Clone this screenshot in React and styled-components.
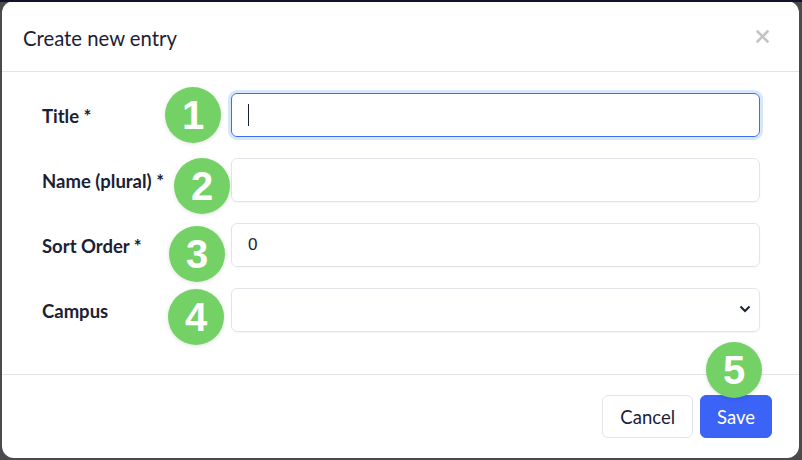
import React from 'react'
import styled, { createGlobalStyle } from 'styled-components'

const GlobalStyle = createGlobalStyle`
  html, body {
    margin: 0;
    padding: 0;
    background: #4b4b4d;
    font-family: Lato, "Noto Sans", sans-serif;
  }
  body {
    border-top: 2px solid #10132a;
  }
`

const Modal = styled.div`
  position: relative;
  box-sizing: border-box;
  margin: -1px 0 0 2px;
  width: 797px;
  height: 457px;
  background: #fff;
  border-radius: 12px;
  display: flex;
  flex-direction: column;
  overflow: hidden;
`

const Header = styled.div`
  height: 70px;
  flex: none;
  display: flex;
  align-items: center;
  justify-content: space-between;
  padding: 0 30px 0 21px;
  border-bottom: 1px solid #e4e4e7;
`

const Heading = styled.h2`
  margin: 0;
  font-size: 20.3px;
  font-weight: 400;
  color: #1b2135;
  padding-top: 3px;
`

const Close = styled.button`
  border: none;
  background: none;
  padding: 0;
  color: #c4c4c8;
  display: flex;
  margin-top: 1px;
`

const Body = styled.div`
  flex: 1;
  padding: 21px 39px 0 40px;
  display: flex;
  flex-direction: column;
  gap: 21px;
  border-bottom: 1px solid #e4e4e7;
`

const Row = styled.div`
  display: grid;
  grid-template-columns: 189px 1fr;
  align-items: center;
  height: 44px;
`

const Label = styled.label`
  font-size: 18.5px;
  font-weight: 700;
  color: #1b2135;
  padding-top: 2px;
`

const Field = styled.div`
  box-sizing: border-box;
  position: relative;
  height: 44px;
  border-radius: 6px;
  border: 1px solid ${p => (p.focused ? '#3d6ef2' : '#e3e4ea')};
  box-shadow: ${p => (p.focused ? '0 0 0 3px #d6e7fb' : '0 1px 2px rgba(0,0,0,0.04)')};
  display: flex;
  align-items: center;
  padding: 0 16px;
  font-size: 17px;
  color: #1b2135;
  font-family: "Liberation Sans", Arial, sans-serif;
`

const Caret = styled.span`
  width: 1px;
  height: 22px;
  background: #1b2135;
`

const Chevron = styled.svg`
  position: absolute;
  right: 8px;
  top: 16px;
`

const Footer = styled.div`
  height: 83px;
  flex: none;
  display: flex;
  justify-content: flex-end;
  align-items: flex-start;
  gap: 7px;
  padding: 20px 27px 0 0;
  box-sizing: border-box;
`

const Button = styled.button`
  height: 43px;
  padding: 0 ${p => (p.primary ? '16px' : '17px')};
  border-radius: 6px;
  font-family: Lato, sans-serif;
  font-size: 18.5px;
  border: 1px solid ${p => (p.primary ? '#3b63f6' : '#e3e4ea')};
  background: ${p => (p.primary ? '#3b63f6' : '#fff')};
  color: ${p => (p.primary ? '#fff' : '#1b2135')};
`

const Marker = styled.div`
  position: absolute;
  width: 56px;
  height: 56px;
  border-radius: 50%;
  background: #73d165;
  color: #fff;
  font-family: "Liberation Sans", Arial, sans-serif;
  font-weight: 700;
  font-size: 40px;
  display: flex;
  align-items: center;
  justify-content: center;
  box-shadow: 0 1px 4px rgba(0,0,0,0.12);
  left: ${p => p.x - 30}px;
  top: ${p => p.y - 28 + 1}px;
`

const fields = [
  { label: 'Title *', focused: true },
  { label: 'Name (plural) *' },
  { label: 'Sort Order *', value: '0' },
  { label: 'Campus', select: true },
]

const markers = [
  [193, 113], [202, 184], [197, 252], [196, 315], [734, 368],
]

export default function App() {
  return (
    <>
      <GlobalStyle />
      <Modal>
        <Header>
          <Heading>Create new entry</Heading>
          <Close>
            <svg width="13" height="13" viewBox="0 0 13 13">
              <path d="M1.5 1.5l10 10M11.5 1.5l-10 10" stroke="currentColor" strokeWidth="2.6" strokeLinecap="round" />
            </svg>
          </Close>
        </Header>
        <Body>
          {fields.map(f => (
            <Row key={f.label}>
              <Label>{f.label}</Label>
              <Field focused={f.focused}>
                {f.focused && <Caret />}
                {f.value}
                {f.select && (
                  <Chevron width="12" height="8" viewBox="0 0 12 8">
                    <path d="M1.5 1.5l4.5 4.5 4.5-4.5" fill="none" stroke="#1b2135" strokeWidth="2" />
                  </Chevron>
                )}
              </Field>
            </Row>
          ))}
        </Body>
        <Footer>
          <Button>Cancel</Button>
          <Button primary>Save</Button>
        </Footer>
        {markers.map(([x, y], i) => (
          <Marker key={i} x={x} y={y}>{i + 1}</Marker>
        ))}
      </Modal>
    </>
  )
}
